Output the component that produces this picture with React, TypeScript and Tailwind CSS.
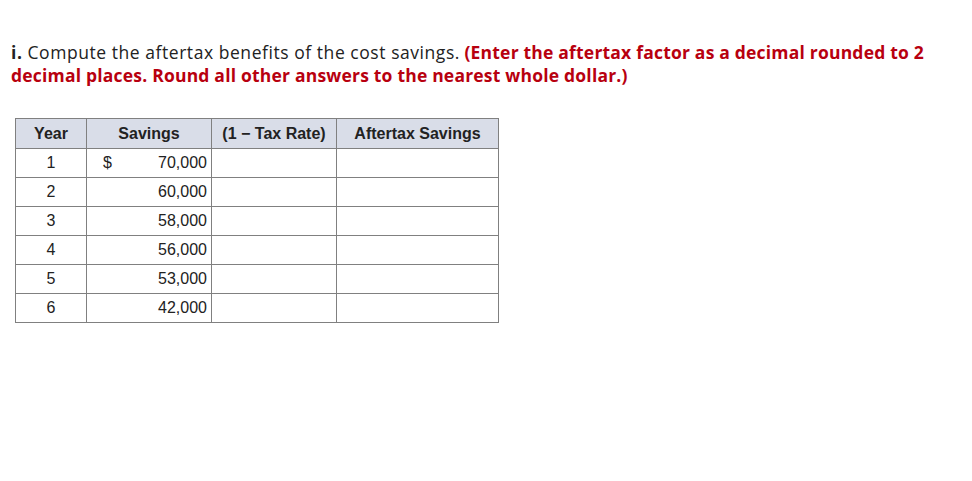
import React from 'react';

const rows = [
  { year: 1, savings: '70,000', dollar: true },
  { year: 2, savings: '60,000' },
  { year: 3, savings: '58,000' },
  { year: 4, savings: '56,000' },
  { year: 5, savings: '53,000' },
  { year: 6, savings: '42,000' },
];

export default function App() {
  return (
    <div className="min-h-[481px] w-[972px] bg-white">
      <div className="pl-[11px] pt-[41px]">
        {/* Prompt */}
        <p className="w-[945px] font-['Open_Sans',sans-serif] text-[17.5px] leading-[23px] text-[#222]">
          <span className="tracking-[0.55px]"><b>i.</b> Compute the aftertax benefits of the cost savings.</span>{' '}
          <b className="tracking-[0.2px] text-[#b8000f]">(Enter the aftertax factor as a decimal rounded to 2 decimal places. Round all other answers to the nearest whole dollar.)</b>
        </p>

        {/* Table */}
        <table className="mt-[31px] ml-[4px] border-collapse font-['Liberation_Sans',Arial,sans-serif] text-[16px] leading-none text-[#222]">
          <thead>
            <tr className="h-[30px] bg-[#d9dde8]">
              <th className="w-[71px] border border-[#808080] font-bold">Year</th>
              <th className="w-[125px] border border-[#808080] font-bold">Savings</th>
              <th className="w-[125px] border border-[#808080] font-bold">(1 − Tax Rate)</th>
              <th className="w-[162px] border border-[#808080] font-bold">Aftertax Savings</th>
            </tr>
          </thead>
          <tbody>
            {rows.map(r => (
              <tr key={r.year} className="h-[29px]">
                <td className="border border-[#808080] text-center">{r.year}</td>
                <td className="border border-[#808080] px-[4px]">
                  <div className="flex justify-between pl-[12px]">
                    <span>{r.dollar ? '$' : ''}</span>
                    <span>{r.savings}</span>
                  </div>
                </td>
                <td className="border border-[#808080]"></td>
                <td className="border border-[#808080]"></td>
              </tr>
            ))}
          </tbody>
        </table>
      </div>
    </div>
  );
}
